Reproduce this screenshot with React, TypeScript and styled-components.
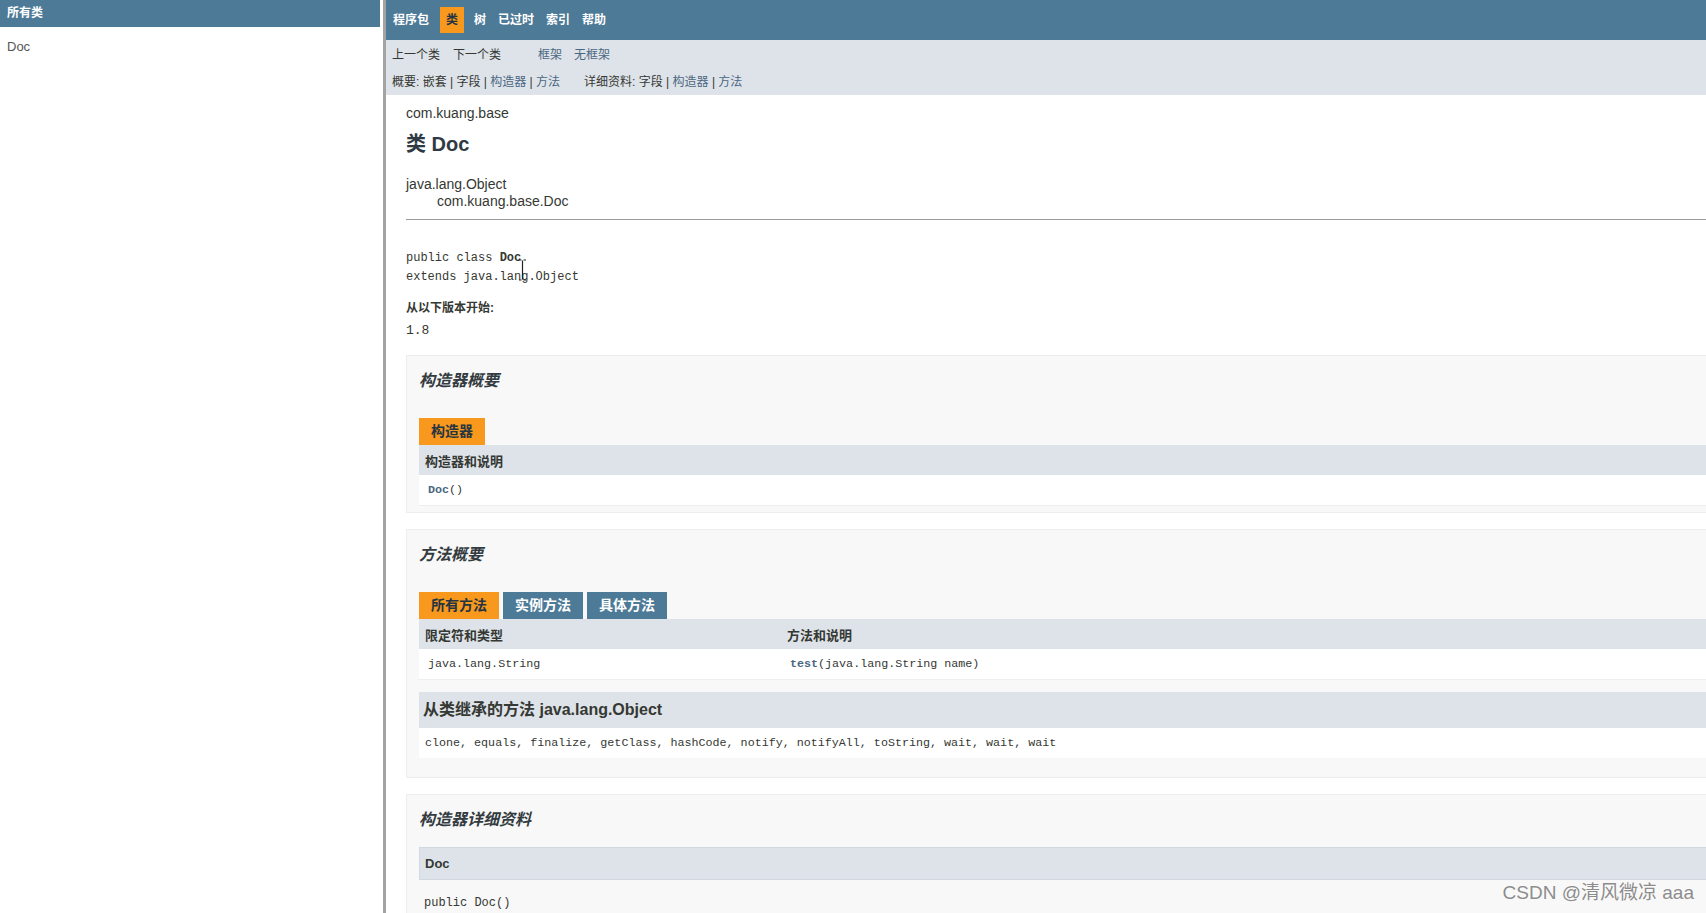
import React from "react";
import styled, { createGlobalStyle } from "styled-components";

const sans = `"Liberation Sans", Arial, "Noto Sans CJK SC", sans-serif`;
const mono = `"Liberation Mono", "Courier New", "Noto Sans CJK SC", monospace`;

const GlobalStyle = createGlobalStyle`
  html, body, #root {
    height: 100%;
  }
  body {
    margin: 0;
    overflow: hidden;
    background: #fff;
    color: #353833;
    font-family: ${sans};
  }
`;

const Page = styled.div`
  display: flex;
  height: 100vh;
  position: relative;
`;

const LeftFrame = styled.aside`
  width: 380px;
  flex-shrink: 0;
  background: #fff;
`;

const LeftHeader = styled.div`
  height: 27px;
  line-height: 27px;
  padding-left: 7px;
  background: #4d7a97;
  color: #fff;
  font-size: 12px;
  font-weight: bold;
`;

const LeftList = styled.ul`
  list-style: none;
  margin: 0;
  padding: 12px 0 0 7px;
`;

const LeftItem = styled.li`
  font-size: 13px;
  line-height: 16px;
  color: #555;
`;

const Divider = styled.div`
  width: 3px;
  flex-shrink: 0;
  border-left: 3px solid #fff;
  background: #a3a3a3;
`;

const MainFrame = styled.main`
  flex: 1;
  min-width: 0;
  overflow: hidden;
`;

const TopNav = styled.ul`
  display: flex;
  align-items: center;
  height: 40px;
  margin: 0;
  padding: 0 0 0 1px;
  list-style: none;
  background: #4d7a97;
`;

const NavItem = styled.li<{ $active?: boolean }>`
  height: 26px;
  line-height: 26px;
  padding: 0 6px;
  margin: ${(p) => (p.$active ? "0 4px 0 5px" : "0")};
  font-size: 12px;
  font-weight: bold;
  color: ${(p) => (p.$active ? "#253441" : "#fff")};
  background: ${(p) => (p.$active ? "#f8981d" : "transparent")};
`;

const SubNav = styled.div`
  background: #dee3e9;
  font-size: 12px;
`;

const SubRow = styled.div<{ $h: number }>`
  display: flex;
  align-items: center;
  height: ${(p) => p.$h}px;
  padding-left: 6px;
`;

const SubList = styled.div<{ $offset?: number; $gap?: number }>`
  display: flex;
  gap: ${(p) => p.$gap ?? 12}px;
  margin-left: ${(p) => p.$offset || 0}px;
`;

const SubLink = styled.span<{ $link?: boolean }>`
  color: ${(p) => (p.$link ? "#4a6782" : "#353833")};
`;

const Content = styled.div`
  padding: 0 0 0 20px;
`;

const PackageName = styled.div`
  margin-top: 10px;
  font-size: 14px;
  line-height: 17px;
`;

const Title = styled.h2`
  margin: 10px 0 0;
  font-size: 20px;
  line-height: 24px;
  font-weight: bold;
  color: #2f3a44;
`;

const Inheritance = styled.div`
  margin-top: 20px;
  font-size: 14px;
  line-height: 17px;
`;

const InheritChild = styled.div`
  padding-left: 31px;
`;

const Rule = styled.hr`
  margin: 9px 0 0;
  border: 0;
  border-top: 1px solid #9a9a9a;
`;

const Signature = styled.pre`
  margin: 29px 0 0;
  font-family: ${mono};
  font-size: 12px;
  line-height: 19px;
`;

const Label = styled.div`
  margin-top: 13px;
  font-size: 12px;
  line-height: 16px;
  font-weight: bold;
`;

const Since = styled.div`
  margin-top: 6px;
  font-family: ${mono};
  font-size: 13px;
  line-height: 18px;
`;

const Block = styled.section`
  margin: 0 -40px 16px 0;
  padding: 0 0 6px 12px;
  background: #f8f8f8;
  border: 1px solid #ededed;
`;

const FirstBlock = styled(Block)`
  margin-top: 15px;
`;

const BlockTitle = styled.h3<{ $after?: number }>`
  margin: 15px 0 ${(p) => p.$after ?? 27}px;
  font-size: 16px;
  line-height: 20px;
  font-style: italic;
  font-weight: bold;
  color: #333b40;
`;

const Tabs = styled.div`
  display: flex;
  gap: 4px;
`;

const Tab = styled.span<{ $active?: boolean }>`
  height: 27px;
  line-height: 27px;
  padding: 0 12px;
  font-size: 14px;
  font-weight: bold;
  color: ${(p) => (p.$active ? "#253441" : "#fff")};
  background: ${(p) => (p.$active ? "#f8981d" : "#4d7a97")};
`;

const Table = styled.table`
  width: 100%;
  border-collapse: collapse;
  border-bottom: 1px solid #eeeeee;
`;

const Th = styled.th<{ $w?: number }>`
  height: 30px;
  padding: 0 6px;
  width: ${(p) => (p.$w ? `${p.$w}px` : "auto")};
  text-align: left;
  font-size: 13px;
  font-weight: bold;
  background: #dee3e9;
`;

const Td = styled.td`
  height: 30px;
  padding: 0 6px 0 9px;
  background: #fff;
  font-family: ${mono};
  font-size: 11.7px;
`;

const MemberLink = styled.span`
  color: #4a6782;
  font-weight: bold;
`;

const InheritedTitle = styled.div`
  margin-top: 12px;
  height: 36px;
  line-height: 36px;
  padding-left: 4px;
  background: #dee3e9;
  font-size: 16px;
  font-weight: bold;
`;

const InheritedList = styled.div`
  height: 30px;
  line-height: 30px;
  padding-left: 6px;
  margin-bottom: 13px;
  background: #fff;
  font-family: ${mono};
  font-size: 11.7px;
`;

const DetailHeader = styled.div`
  height: 31px;
  line-height: 31px;
  padding-left: 5px;
  border: 1px solid #d0d9e0;
  background: #dee3e9;
  font-size: 13px;
  font-weight: bold;
`;

const DetailCode = styled.pre`
  margin: 14px 0 0;
  padding-left: 5px;
  font-family: ${mono};
  font-size: 12px;
  line-height: 18px;
`;

const Watermark = styled.div`
  position: absolute;
  right: 12px;
  bottom: 9px;
  font-size: 19px;
  color: #8c8c8c;
  text-shadow: 0 0 2px #fff;
  font-family: ${sans};
`;

const Cursor = styled.svg`
  position: absolute;
  left: 518px;
  top: 259px;
`;

const navItems = ["程序包", "类", "树", "已过时", "索引", "帮助"];

export default function App() {
  return (
    <>
      <GlobalStyle />
      <Page>
        <LeftFrame>
          <LeftHeader>所有类</LeftHeader>
          <LeftList>
            <LeftItem>Doc</LeftItem>
          </LeftList>
        </LeftFrame>
        <Divider />
        <MainFrame>
          <TopNav>
            {navItems.map((n) => (
              <NavItem key={n} $active={n === "类"}>
                {n}
              </NavItem>
            ))}
          </TopNav>
          <SubNav>
            <SubRow $h={26}>
              <SubList $gap={13}>
                <SubLink>上一个类</SubLink>
                <SubLink>下一个类</SubLink>
              </SubList>
              <SubList $offset={37}>
                <SubLink $link>框架</SubLink>
                <SubLink $link>无框架</SubLink>
              </SubList>
            </SubRow>
            <SubRow $h={29}>
              <SubList $gap={0}>
                <SubLink>
                  概要:&nbsp;嵌套&nbsp;|&nbsp;字段&nbsp;|&nbsp;<SubLink $link>构造器</SubLink>&nbsp;|&nbsp;
                  <SubLink $link>方法</SubLink>
                </SubLink>
              </SubList>
              <SubList $offset={24}>
                <SubLink>
                  详细资料:&nbsp;字段&nbsp;|&nbsp;<SubLink $link>构造器</SubLink>&nbsp;|&nbsp;
                  <SubLink $link>方法</SubLink>
                </SubLink>
              </SubList>
            </SubRow>
          </SubNav>

          <Content>
            <PackageName>com.kuang.base</PackageName>
            <Title>类 Doc</Title>
            <Inheritance>
              <div>java.lang.Object</div>
              <InheritChild>com.kuang.base.Doc</InheritChild>
            </Inheritance>
            <Rule />
            <Signature>
              public class <b>Doc</b>
              {"\n"}extends java.lang.Object
            </Signature>
            <Label>从以下版本开始:</Label>
            <Since>1.8</Since>

            <FirstBlock>
              <BlockTitle>构造器概要</BlockTitle>
              <Tabs>
                <Tab $active>构造器</Tab>
              </Tabs>
              <Table>
                <thead>
                  <tr>
                    <Th>构造器和说明</Th>
                  </tr>
                </thead>
                <tbody>
                  <tr>
                    <Td>
                      <MemberLink>Doc</MemberLink>()
                    </Td>
                  </tr>
                </tbody>
              </Table>
            </FirstBlock>

            <Block>
              <BlockTitle>方法概要</BlockTitle>
              <Tabs>
                <Tab $active>所有方法</Tab>
                <Tab>实例方法</Tab>
                <Tab>具体方法</Tab>
              </Tabs>
              <Table>
                <thead>
                  <tr>
                    <Th $w={350}>限定符和类型</Th>
                    <Th>方法和说明</Th>
                  </tr>
                </thead>
                <tbody>
                  <tr>
                    <Td>java.lang.String</Td>
                    <Td>
                      <MemberLink>test</MemberLink>(java.lang.String name)
                    </Td>
                  </tr>
                </tbody>
              </Table>
              <InheritedTitle>从类继承的方法 java.lang.Object</InheritedTitle>
              <InheritedList>
                clone, equals, finalize, getClass, hashCode, notify, notifyAll, toString, wait, wait, wait
              </InheritedList>
            </Block>

            <Block>
              <BlockTitle $after={17}>构造器详细资料</BlockTitle>
              <DetailHeader>Doc</DetailHeader>
              <DetailCode>public Doc()</DetailCode>
            </Block>
          </Content>
        </MainFrame>

        <Cursor width="9" height="22" viewBox="0 0 9 22">
          <path d="M1 1h2.5M5.5 1H8M4.5 1.5v19M1 21h2.5M5.5 21H8" stroke="#222" strokeWidth="1.2" fill="none" />
        </Cursor>
        <Watermark>CSDN @清风微凉 aaa</Watermark>
      </Page>
    </>
  );
}
